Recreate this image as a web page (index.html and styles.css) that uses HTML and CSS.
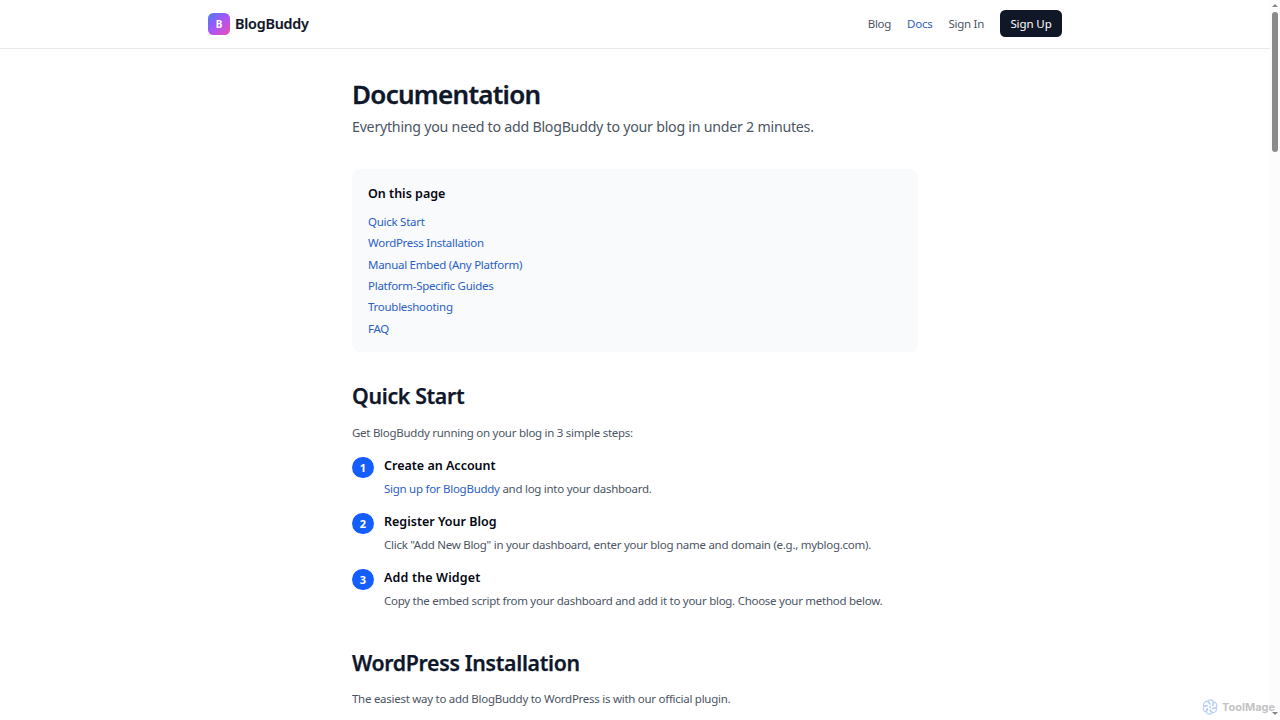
FILE: index.html
```html
<!DOCTYPE html>
<html lang="en">
<head>
<meta charset="utf-8">
<title>Documentation - BlogBuddy</title>
<link rel="stylesheet" href="styles.css">
</head>
<body>
<header class="header">
  <div class="header-inner">
    <a class="brand"><span class="brand-mark">B</span><span class="brand-name">BlogBuddy</span></a>
    <nav class="nav"><a>Blog</a><a class="active">Docs</a><a>Sign In</a><a class="signup">Sign Up</a></nav>
  </div>
</header>
<main class="main">
  <h1 class="title">Documentation</h1>
  <p class="lead">Everything you need to add BlogBuddy to your blog in under 2 minutes.</p>
  <section class="toc">
    <h3 class="toc-title">On this page</h3>
    <ul class="toc-list">
      <li><a>Quick Start</a></li>
      <li><a>WordPress Installation</a></li>
      <li><a>Manual Embed (Any Platform)</a></li>
      <li><a>Platform-Specific Guides</a></li>
      <li><a>Troubleshooting</a></li>
      <li><a>FAQ</a></li>
    </ul>
  </section>
  <section class="section">
    <h2 class="heading">Quick Start</h2>
    <p class="text intro">Get BlogBuddy running on your blog in 3 simple steps:</p>
    <ol class="steps">
      <li class="step"><span class="num">1</span><div><h3 class="step-title">Create an Account</h3><p class="text"><a>Sign up for BlogBuddy</a> and log into your dashboard.</p></div></li>
      <li class="step"><span class="num">2</span><div><h3 class="step-title">Register Your Blog</h3><p class="text">Click "Add New Blog" in your dashboard, enter your blog name and domain (e.g., myblog.com).</p></div></li>
      <li class="step"><span class="num">3</span><div><h3 class="step-title widget-title">Add the Widget</h3><p class="text">Copy the embed script from your dashboard and add it to your blog. Choose your method below.</p></div></li>
    </ol>
  </section>
  <section class="section section-next">
    <h2 class="heading">WordPress Installation</h2>
    <p class="text intro">The easiest way to add BlogBuddy to WordPress is with our official plugin.</p>
  </section>
</main>
<div class="scrollbar"><span class="arrow-up"></span><span class="thumb"></span><span class="arrow-down"></span></div>
<div class="watermark">
  <svg class="wm-icon" viewBox="0 0 16 16" fill="none" stroke="#b5cdf7" stroke-width="1.1">
    <path id="petal" d="M8 5C6 4 5.200 2.300 6.400 1.300C8.500.2 11.200 1.200 11.700 3.400C12 5.200 10.800 6.500 9.800 6.900"/>
    <use href="#petal" transform="rotate(60 8 8)"/>
    <use href="#petal" transform="rotate(120 8 8)"/>
    <use href="#petal" transform="rotate(180 8 8)"/>
    <use href="#petal" transform="rotate(240 8 8)"/>
    <use href="#petal" transform="rotate(300 8 8)"/>
    <circle cx="8" cy="8" r="1" fill="#b5cdf7" stroke="none"/>
  </svg><span>ToolMage</span>
</div>
</body>
</html>
```
FILE: styles.css
```css
* { box-sizing: border-box; margin: 0; padding: 0; }
body { width: 1280px; height: 720px; overflow: hidden; background: #fff; color: #0f172a; font-family: "Noto Sans", sans-serif; font-size: 11.5px; letter-spacing: -0.27px; }
.header { height: 49px; width: 1270px; border-bottom: 1px solid #e8eaed; }
.header-inner { width: 854px; height: 48px; margin: 0 auto; display: flex; align-items: center; justify-content: space-between; }
.brand { display: flex; align-items: center; gap: 5px; }
.brand-mark { width: 22px; height: 22px; margin-top: -1px; border-radius: 5.3px; background: linear-gradient(135deg, #4b7cf5, #a855f7 50%, #ec4fb0); color: #fff; font-size: 10px; font-weight: 700; display: flex; align-items: center; justify-content: center; }
.brand-name { margin-top: -1px; font-size: 14.3px; font-weight: 600; letter-spacing: -0.2px; -webkit-text-stroke: 0.15px; }
.nav { display: flex; align-items: center; gap: 16px; color: #4b5563; }
.nav a { position: relative; top: -0.5px; }
.nav .active { color: #2c60c4; }
.signup { width: 62px; height: 27px; border-radius: 5.3px; background: #101828; color: #fff; display: flex; align-items: center; justify-content: center; letter-spacing: -0.1px; }
.main { width: 566px; margin-left: 352px; padding-top: 30px; }
.title { font-size: 26px; line-height: 31px; font-weight: 600; letter-spacing: -0.72px; -webkit-text-stroke: 0.3px; }
.lead { font-size: 14.2px; line-height: 24px; margin-top: 5px; color: #4b5563; letter-spacing: -0.24px; }
.toc { margin-top: 30px; height: 183px; padding: 17px 16px; border-radius: 8px; background: #f8fafc; }
.toc-title { font-size: 12.5px; line-height: 16px; font-weight: 600; color: #030712; letter-spacing: 0; }
.toc-list { list-style: none; margin-top: 9px; }
.toc-list li { height: 21.33px; line-height: 21.33px; }
.toc-list a, .text a { color: #2c60c4; }
.section { margin-top: 30px; }
.section-next { margin-top: 39px; }
.heading { font-size: 21.3px; line-height: 28px; font-weight: 600; letter-spacing: -0.33px; -webkit-text-stroke: 0.25px; }
.text { line-height: 18px; color: #4b5563; }
.intro { margin-top: 14px; }
.section-next .intro { margin-top: 13px; }
.steps { list-style: none; margin-top: 13px; display: grid; gap: 13px; }
.step { display: flex; gap: 10.5px; height: 43px; }
.num { width: 21.5px; height: 21.5px; margin-top: 1.5px; border-radius: 50%; background: #155dfc; color: #fff; font-size: 11px; font-weight: 700; display: flex; align-items: center; justify-content: center; flex: none; }
.step-title { font-size: 12.5px; line-height: 20px; padding-top: 1px; font-weight: 600; color: #030712; letter-spacing: 0; }
.widget-title { letter-spacing: 0.15px; }
.step .text { margin-top: 4px; white-space: nowrap; }
.scrollbar { position: absolute; right: 0; top: 0; width: 10px; height: 720px; background: #fcfcfc; display: flex; flex-direction: column; align-items: center; }
.arrow-up { margin-top: 4px; border: 3px solid transparent; border-top: 0; border-bottom: 3px solid #858585; }
.thumb { margin-top: 5px; width: 6px; height: 140px; border-radius: 3px; background: #8b8b8b; }
.arrow-down { margin-top: auto; margin-bottom: 5px; border: 3px solid transparent; border-bottom: 0; border-top: 3px solid #858585; }
.watermark { position: absolute; left: 1202px; top: 699px; display: flex; align-items: center; gap: 4px; height: 16px; font: 700 11px Inter, sans-serif; letter-spacing: 0; color: #c4c4c4; }
.wm-icon { width: 16px; height: 16px; }
```
